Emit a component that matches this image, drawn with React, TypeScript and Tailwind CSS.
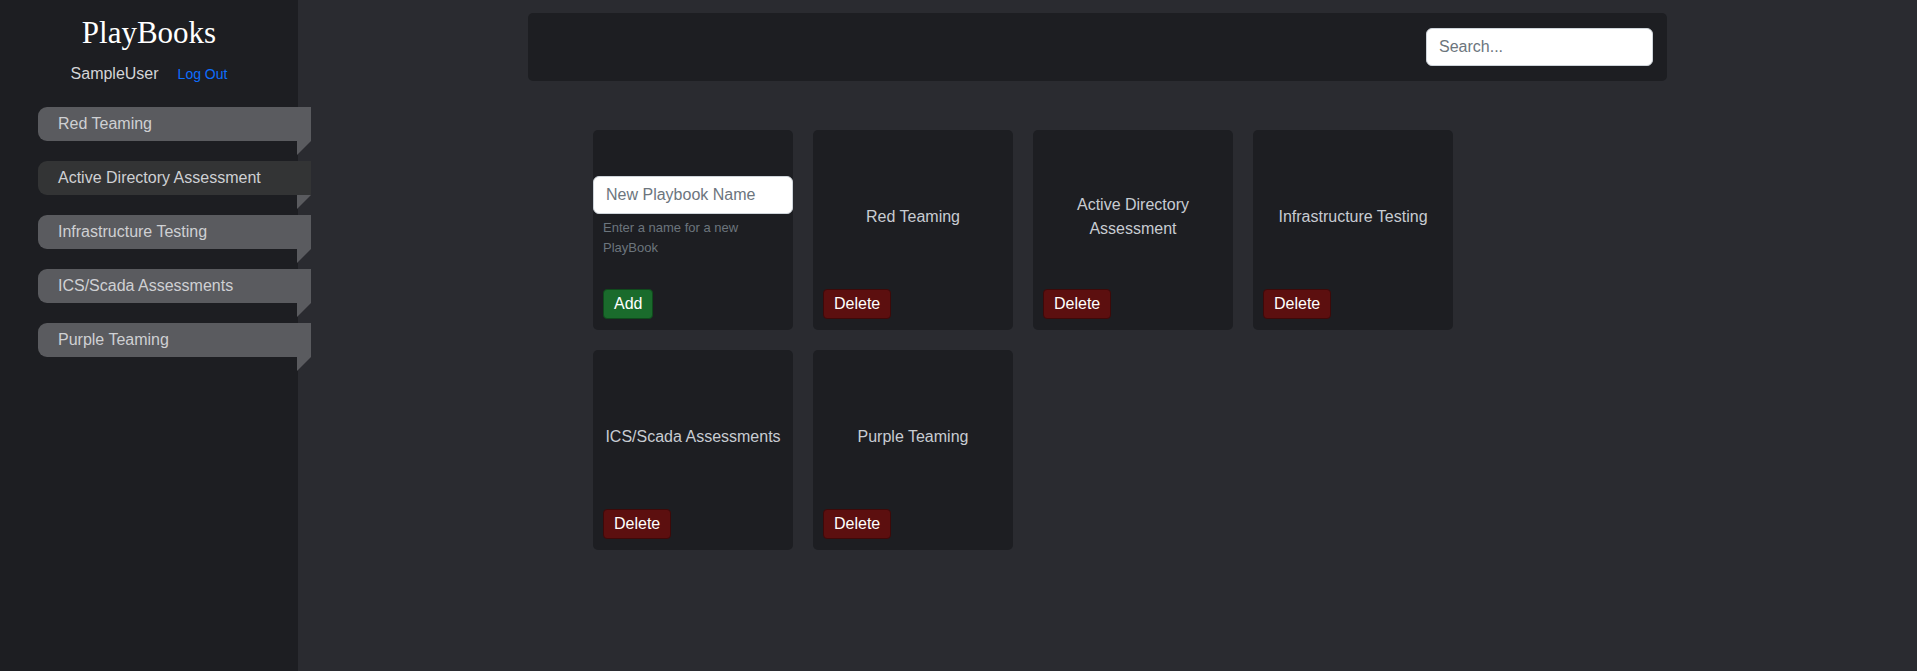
import React from 'react';

const navItems = [
  { name: 'Red Teaming', active: false },
  { name: 'Active Directory Assessment', active: true },
  { name: 'Infrastructure Testing', active: false },
  { name: 'ICS/Scada Assessments', active: false },
  { name: 'Purple Teaming', active: false },
];

const playbooks = [
  'Red Teaming',
  'Active Directory Assessment',
  'Infrastructure Testing',
  'ICS/Scada Assessments',
  'Purple Teaming',
];

const Sidebar: React.FC = () => {
  return (
    <aside className="relative z-10 w-[298px] shrink-0 bg-[#1d1e22] pt-[14px]">
      <h1 className="text-center font-['Liberation_Serif',serif] text-[31px] leading-[38px] text-white">
        PlayBooks
      </h1>
      <div className="mt-[10px] flex items-baseline justify-center gap-[19px] leading-[24px]">
        <span className="text-[16px] text-[#d4d5d8]">SampleUser</span>
        <a href="#" className="text-[14px] text-[#0d6efd]">
          Log Out
        </a>
      </div>
      <nav className="mt-[21px] flex flex-col gap-[20px] pl-[38px]">
        {navItems.map((item) => (
          <div key={item.name} className="relative w-[273px]">
            <div
              className={`flex h-[34px] items-center rounded-l-[9px] pl-[20px] text-[16px] text-[#cfd0d3] ${
                item.active ? 'bg-[#333435]' : 'bg-[#5a5b5f]'
              }`}
            >
              {item.name}
            </div>
            <div className="absolute right-0 top-full h-0 w-0 border-r-[14px] border-t-[14px] border-r-transparent border-t-[#5a5b5f]" />
          </div>
        ))}
      </nav>
    </aside>
  );
};

const DeleteButton: React.FC = () => (
  <button className="h-[30px] rounded-[4px] border border-[#3d0909] bg-[#5c0f0f] px-[10px] text-[16px] leading-none text-white">
    Delete
  </button>
);

const NewCard: React.FC = () => (
  <div className="flex h-[200px] w-[200px] flex-col rounded-[5px] bg-[#1d1e22] pt-[46px]">
    <input
      type="text"
      placeholder="New Playbook Name"
      className="h-[38px] w-full rounded-[6px] border border-[#ced4da] bg-white px-[12px] text-[16px] text-[#212529] outline-none placeholder:text-[#6c757d]"
    />
    <p className="mt-[4px] px-[10px] text-[13px] leading-[19.5px] text-[#6c757d]">
      Enter a name for a new PlayBook
    </p>
    <div className="mt-auto px-[10px] pb-[11px]">
      <button className="h-[30px] rounded-[4px] border border-[#0f4a1c] bg-[#1a6b2c] px-[10px] text-[16px] leading-none text-white">
        Add
      </button>
    </div>
  </div>
);

const PlaybookCard: React.FC<{ name: string }> = ({ name }) => (
  <div className="flex h-[200px] w-[200px] flex-col rounded-[5px] bg-[#1d1e22]">
    <div className="flex flex-1 items-center justify-center px-[10px] pt-[14px] text-center text-[16px] leading-[24px] text-[#c8ccd2]">
      {name}
    </div>
    <div className="px-[10px] pb-[11px]">
      <DeleteButton />
    </div>
  </div>
);

export default function App() {
  return (
    <div className="flex min-h-screen font-['Liberation_Sans',Arial,sans-serif]">
      <Sidebar />
      <main className="flex-1 bg-[#2a2b30] pt-[13px]">
        <header className="ml-[230px] flex h-[68px] w-[1139px] items-center justify-end rounded-[5px] bg-[#1d1e22] pr-[14px]">
          <input
            type="text"
            placeholder="Search..."
            className="h-[38px] w-[227px] rounded-[6px] border border-[#ced4da] bg-white px-[12px] text-[16px] text-[#212529] outline-none placeholder:text-[#6c757d]"
          />
        </header>
        <section className="ml-[295px] mt-[49px] grid grid-cols-[repeat(4,200px)] gap-[20px]">
          <NewCard />
          {playbooks.map((p) => (
            <PlaybookCard key={p} name={p} />
          ))}
        </section>
      </main>
    </div>
  );
}
